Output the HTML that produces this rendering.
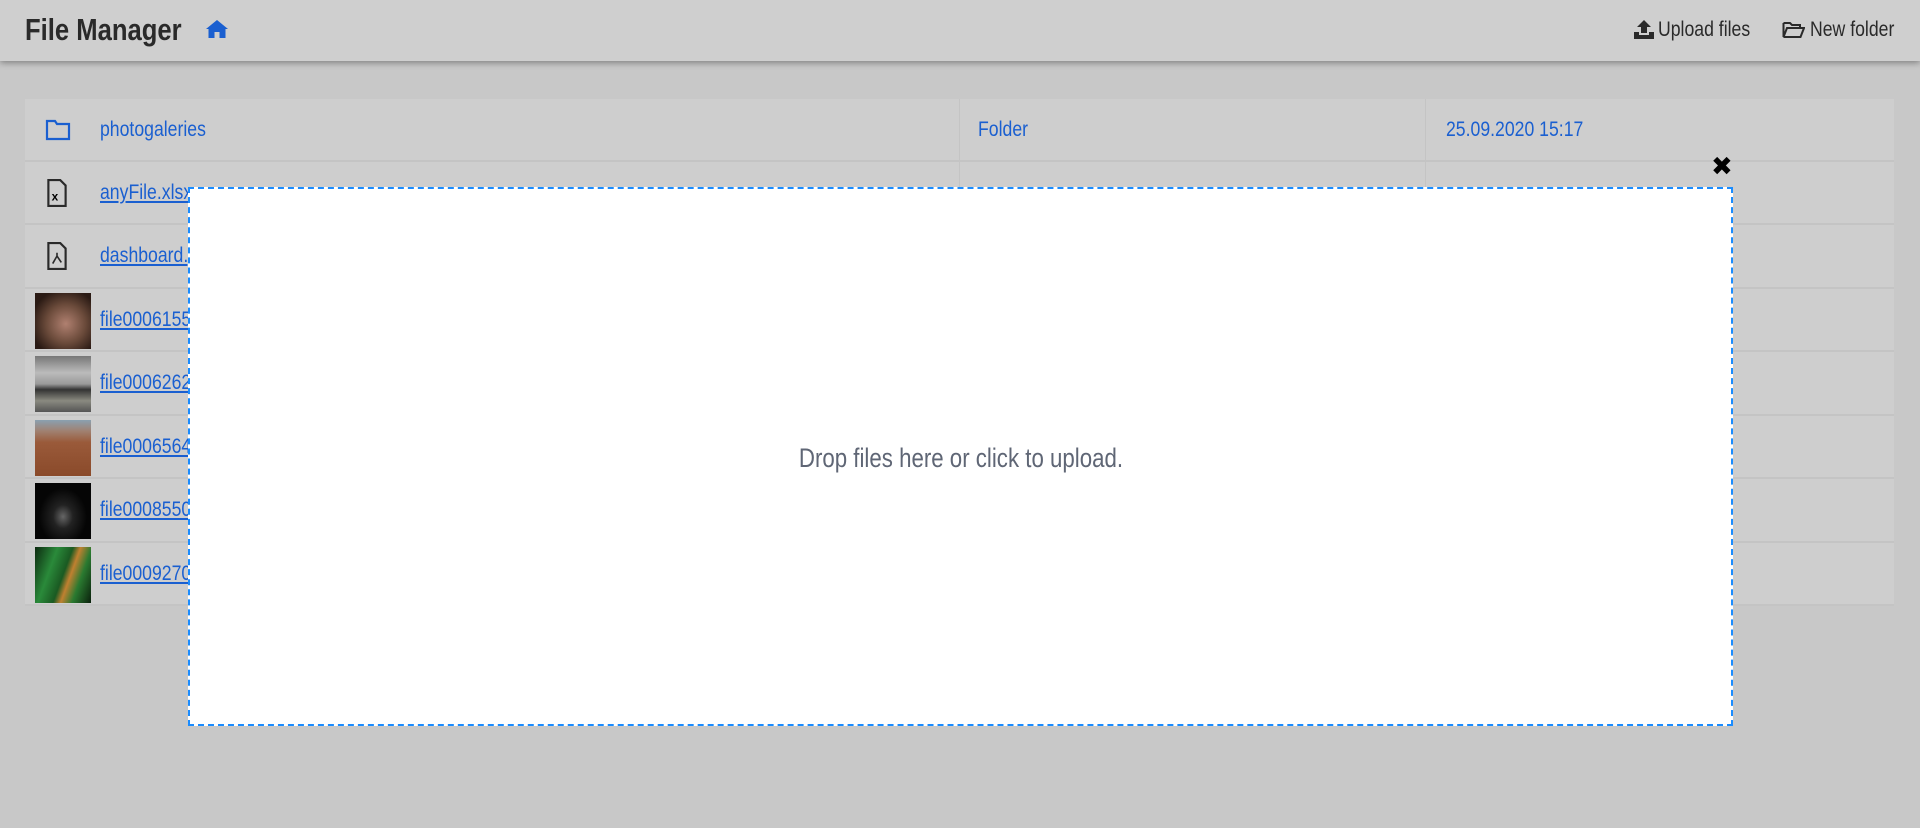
<!DOCTYPE html>
<html><head><meta charset="utf-8">
<style>
*{box-sizing:border-box;margin:0;padding:0}
body{width:1920px;height:828px;background:#c8c8c8;font-family:"Liberation Sans",sans-serif;position:relative;overflow:hidden}
.n{display:inline-block;transform:scaleX(.84);transform-origin:left center;white-space:nowrap}
.hdr{position:absolute;left:0;top:0;width:1920px;height:61px;background:#cfcfcf;box-shadow:0 2px 6px rgba(0,0,0,.35)}
.title{position:absolute;left:25px;top:13px;font-size:30.5px;font-weight:bold;color:#2a2a2a}
.home{position:absolute;left:205px;top:19px}
.act{position:absolute;top:18px;font-size:21px;color:#2a2a2a}
.tbl{position:absolute;left:25px;top:99px;width:1869px;background:#cecece}
.row{position:relative;border-bottom:2px solid #c4c4c4;height:63.5px}
.ic{position:absolute;left:20px;top:20px}
.th{position:absolute;left:10px;top:4px;width:56px;height:56px}
.nm{position:absolute;left:75px;top:19px;font-size:21px;color:#1a5fd0}
.nm.u .n{text-decoration:underline}
.c1{position:absolute;left:934px;top:0;bottom:0;border-left:1px solid #c4c4c4}
.c2{position:absolute;left:1400px;top:0;bottom:0;border-left:1px solid #c4c4c4}
.modal{position:absolute;left:188px;top:187px;width:1545px;height:539px;background:#fff;border:2px dashed #1a8cff}
.drop{position:absolute;left:0;right:0;top:254px;text-align:center;font-size:26.5px;color:#5f6675}
.drop .n{transform-origin:center}
.x{position:absolute;left:1711px;top:152px;font-size:26px;font-weight:bold;color:#000;font-family:"DejaVu Sans",sans-serif}
</style></head><body>
<div class="hdr">
 <div class="title"><span class="n">File Manager</span></div>
 <svg class="home" width="24" height="20" viewBox="0 0 24 20"><path d="M12 1 L1 10 L3.5 10 L3.5 19 L9.5 19 L9.5 13 L14.5 13 L14.5 19 L20.5 19 L20.5 10 L23 10 Z" fill="#1a5fd0"/></svg>
 <svg class="act" style="left:1633px;top:19px" width="22" height="20" viewBox="0 0 22 20"><path d="M11 1 L4 8 H8 V14 H14 V8 H18 Z" fill="#2a2a2a"/><path d="M1 13 H6 V16 H16 V13 H21 V20 H1 Z" fill="#2a2a2a"/></svg>
 <div class="act" style="left:1658px"><span class="n">Upload files</span></div>
 <svg class="act" style="left:1782px;top:21px" width="23" height="18" viewBox="0 0 23 18"><path d="M1.5 2 H8 L10 4 H18 V7 M1.5 2 V16 L5 7 H22 L18.5 16 H1.5" fill="none" stroke="#2a2a2a" stroke-width="2"/></svg>
 <div class="act" style="left:1810px"><span class="n">New folder</span></div>
</div>
<div class="tbl">
 <div class="row" style="height:63px"><svg class="ic" width="26" height="22" viewBox="0 0 26 22" style="left:20px;top:20px"><path d="M2 2 H10 L12 5 H24 V20 H2 Z" fill="none" stroke="#1a5fd0" stroke-width="2.2"/></svg><div class="nm"><span class="n">photogaleries</span></div><div class="c1"></div><div class="c2"></div><div class="nm" style="left:953px"><span class="n">Folder</span></div><div class="nm" style="left:1421px"><span class="n">25.09.2020 15:17</span></div></div>
 <div class="row" style="height:63px"><svg class="ic" width="22" height="28" viewBox="0 0 20 26" style="left:21px;top:17px"><path d="M2 1 H13 L18 6 V25 H2 Z" fill="none" stroke="#2a2a2a" stroke-width="2"/><text x="5" y="20" font-size="11" font-weight="bold" font-family="Liberation Sans">x</text></svg><div class="nm u"><span class="n">anyFile.xlsx</span></div><div class="c1"></div><div class="c2"></div></div>
 <div class="row" style="height:64px"><svg class="ic" width="22" height="28" viewBox="0 0 20 26" style="left:21px;top:17px"><path d="M2 1 H13 L18 6 V25 H2 Z" fill="none" stroke="#2a2a2a" stroke-width="2"/><path d="M6 20 L10 13 L14 19 M10 10 V13" fill="none" stroke="#2a2a2a" stroke-width="1.5"/></svg><div class="nm u"><span class="n">dashboard.pdf</span></div><div class="c1"></div><div class="c2"></div></div>
 <div class="row" style="height:63px"><div class="th" style="background:radial-gradient(circle at 55% 55%,#b08070 0,#6a4a3a 45%,#2a1a14 80%)"></div><div class="nm u"><span class="n">file0006155.jpg</span></div><div class="c1"></div><div class="c2"></div></div>
 <div class="row" style="height:64px"><div class="th" style="background:linear-gradient(#777 0,#bbb 30%,#999 50%,#333 60%,#8a8a80 80%,#555 100%)"></div><div class="nm u"><span class="n">file0006262.jpg</span></div><div class="c1"></div><div class="c2"></div></div>
 <div class="row" style="height:63px"><div class="th" style="background:linear-gradient(#8aa0b0 0,#a08070 20%,#9a5a3a 40%,#8a4a2a 100%)"></div><div class="nm u"><span class="n">file0006564.jpg</span></div><div class="c1"></div><div class="c2"></div></div>
 <div class="row" style="height:64px"><div class="th" style="background:radial-gradient(ellipse at 50% 60%,#666 0,#222 25%,#050505 60%)"></div><div class="nm u"><span class="n">file0008550.jpg</span></div><div class="c1"></div><div class="c2"></div></div>
 <div class="row" style="height:63px"><div class="th" style="background:linear-gradient(110deg,#0c2a10 0,#2a8a3a 30%,#1a5a22 50%,#c08030 60%,#2a7a30 75%,#0a200c 100%)"></div><div class="nm u"><span class="n">file0009270.jpg</span></div><div class="c1"></div><div class="c2"></div></div>
</div>
<div class="modal"><div class="drop"><span class="n">Drop files here or click to upload.</span></div></div>
<div class="x">✖</div>
</body></html>
